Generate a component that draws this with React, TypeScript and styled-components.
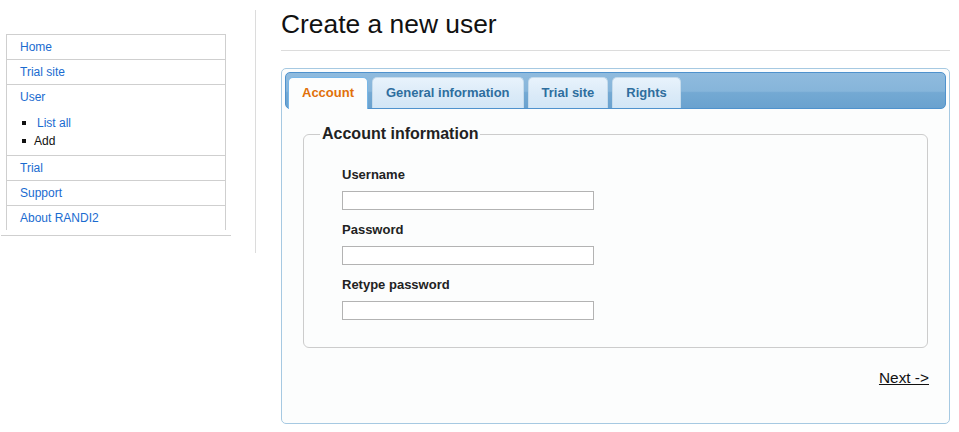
import React from 'react';
import styled, { createGlobalStyle } from 'styled-components';

const Global = createGlobalStyle`
  html, body { margin: 0; padding: 0; background: #fff; }
  body { font-family: "Liberation Sans", Arial, sans-serif; color: #222; }
  * { box-sizing: border-box; }
`;

const Page = styled.div`
  display: flex;
  align-items: flex-start;
  width: 959px;
`;

const Sidebar = styled.aside`
  width: 230px;
  margin-left: 1px;
  padding-top: 34px;
  padding-bottom: 5px;
  border-bottom: 1px solid #cfcfcf;
`;

const NavBox = styled.ul`
  list-style: none;
  margin: 0 0 0 5px;
  padding: 0;
  width: 220px;
  border-left: 1px solid #cfcfcf;
  border-right: 1px solid #cfcfcf;
`;

const NavItem = styled.li`
  border-top: 1px solid #cfcfcf;
  padding-left: 13px;
`;

const NavLink = styled.a`
  display: block;
  font-size: 12px;
  line-height: 24px;
  color: #1a6bd0;
  text-decoration: none;
`;

const SubList = styled.ul`
  list-style: none;
  margin: 5px 0;
  padding: 0 0 0 2px;
`;

const SubItem = styled.li`
  display: flex;
  align-items: center;
  font-size: 12px;
  line-height: 18px;
  color: #111;
  &::before {
    content: '';
    width: 4px;
    height: 4px;
    background: #111;
    margin-right: 8px;
  }
`;

const SubLink = styled.a`
  color: #1a6bd0;
  text-decoration: none;
  padding-left: 3px;
`;

const Divider = styled.div`
  width: 1px;
  height: 243px;
  margin: 10px 0 0 24px;
  background: #dcdcdc;
`;

const Main = styled.main`
  width: 669px;
  margin-left: 25px;
`;

const Title = styled.h1`
  margin: 0;
  padding: 9px 0 11px;
  font-size: 26.4px;
  line-height: 30px;
  font-weight: normal;
  color: #111;
  border-bottom: 1px solid #dcdcdc;
`;

const Panel = styled.div`
  margin-top: 17px;
  height: 356px;
  padding: 3px;
  border: 1px solid #a6c9e2;
  border-radius: 5px;
  background: #fcfdfd;
`;

const TabBar = styled.div`
  display: flex;
  align-items: flex-end;
  gap: 4px;
  height: 37px;
  padding: 4px 2px 0;
  border: 1px solid #4f92cd;
  border-radius: 5px;
  background: linear-gradient(
    to bottom,
    #8fbbde 0%,
    #86b5da 52%,
    #74a9d3 56%,
    #6aa2cf 100%
  );
`;

const Tab = styled.div<{ $active?: boolean }>`
  height: ${(p) => (p.$active ? 32 : 31)}px;
  margin-bottom: ${(p) => (p.$active ? -1 : 0)}px;
  padding: 0 13px;
  border: 1px solid ${(p) => (p.$active ? '#79b7e7' : '#c5dbec')};
  border-bottom: 0;
  border-radius: 5px 5px 0 0;
  font-size: 13px;
  font-weight: bold;
  line-height: 30px;
  white-space: nowrap;
  color: ${(p) => (p.$active ? '#e17009' : '#2e6e9e')};
  background: ${(p) =>
    p.$active ? '#fcfdfd' : 'linear-gradient(to bottom, #e8f3fc 0%, #dcebf8 50%, #d2e6f6 100%)'};
`;

const PanelBody = styled.div`
  padding: 16px 18px 0;
`;

const Fieldset = styled.fieldset`
  margin: 0;
  padding: 0 0 27px 0;
  min-width: 0;
  border: 1px solid #cccccc;
  border-radius: 6px;
`;

const Legend = styled.legend`
  margin-left: 16px;
  padding: 0 2px;
  font-size: 16px;
  font-weight: bold;
  line-height: 18px;
  color: #222;
`;

const FieldList = styled.div`
  display: flex;
  flex-direction: column;
  gap: 12px;
  padding: 24px 0 0 38px;
`;

const Field = styled.div`
  display: flex;
  flex-direction: column;
  align-items: flex-start;
`;

const Label = styled.label`
  font-size: 13px;
  font-weight: bold;
  line-height: 15px;
  margin-bottom: 9px;
  color: #222;
`;

const Input = styled.input`
  width: 252px;
  height: 19px;
  margin: 0;
  padding: 0 2px;
  border: 1px solid #b3b3b3;
  border-radius: 0;
  background: #fff;
  font-family: inherit;
  font-size: 12px;
`;

const Actions = styled.div`
  display: flex;
  justify-content: flex-end;
  margin: 21px -1px 0 0;
`;

const NextLink = styled.a`
  font-size: 15.4px;
  line-height: 18px;
  color: #111;
  text-decoration: underline;
`;

const tabs = ['Account', 'General information', 'Trial site', 'Rights'];
const fields = ['Username', 'Password', 'Retype password'];

export default function App() {
  return (
    <>
      <Global />
      <Page>
        <Sidebar>
          <NavBox>
            <NavItem><NavLink href="#">Home</NavLink></NavItem>
            <NavItem><NavLink href="#">Trial site</NavLink></NavItem>
            <NavItem>
              <NavLink href="#">User</NavLink>
              <SubList>
                <SubItem><SubLink href="#">List all</SubLink></SubItem>
                <SubItem>Add</SubItem>
              </SubList>
            </NavItem>
            <NavItem><NavLink href="#">Trial</NavLink></NavItem>
            <NavItem><NavLink href="#">Support</NavLink></NavItem>
            <NavItem><NavLink href="#">About RANDI2</NavLink></NavItem>
          </NavBox>
        </Sidebar>
        <Divider />
        <Main>
          <Title>Create a new user</Title>
          <Panel>
            <TabBar>
              {tabs.map((t, i) => (
                <Tab key={t} $active={i === 0}>{t}</Tab>
              ))}
            </TabBar>
            <PanelBody>
              <Fieldset>
                <Legend>Account information</Legend>
                <FieldList>
                  {fields.map((f) => (
                    <Field key={f}>
                      <Label>{f}</Label>
                      <Input type={f === 'Username' ? 'text' : 'password'} />
                    </Field>
                  ))}
                </FieldList>
              </Fieldset>
              <Actions>
                <NextLink href="#">Next -&gt;</NextLink>
              </Actions>
            </PanelBody>
          </Panel>
        </Main>
      </Page>
    </>
  );
}
